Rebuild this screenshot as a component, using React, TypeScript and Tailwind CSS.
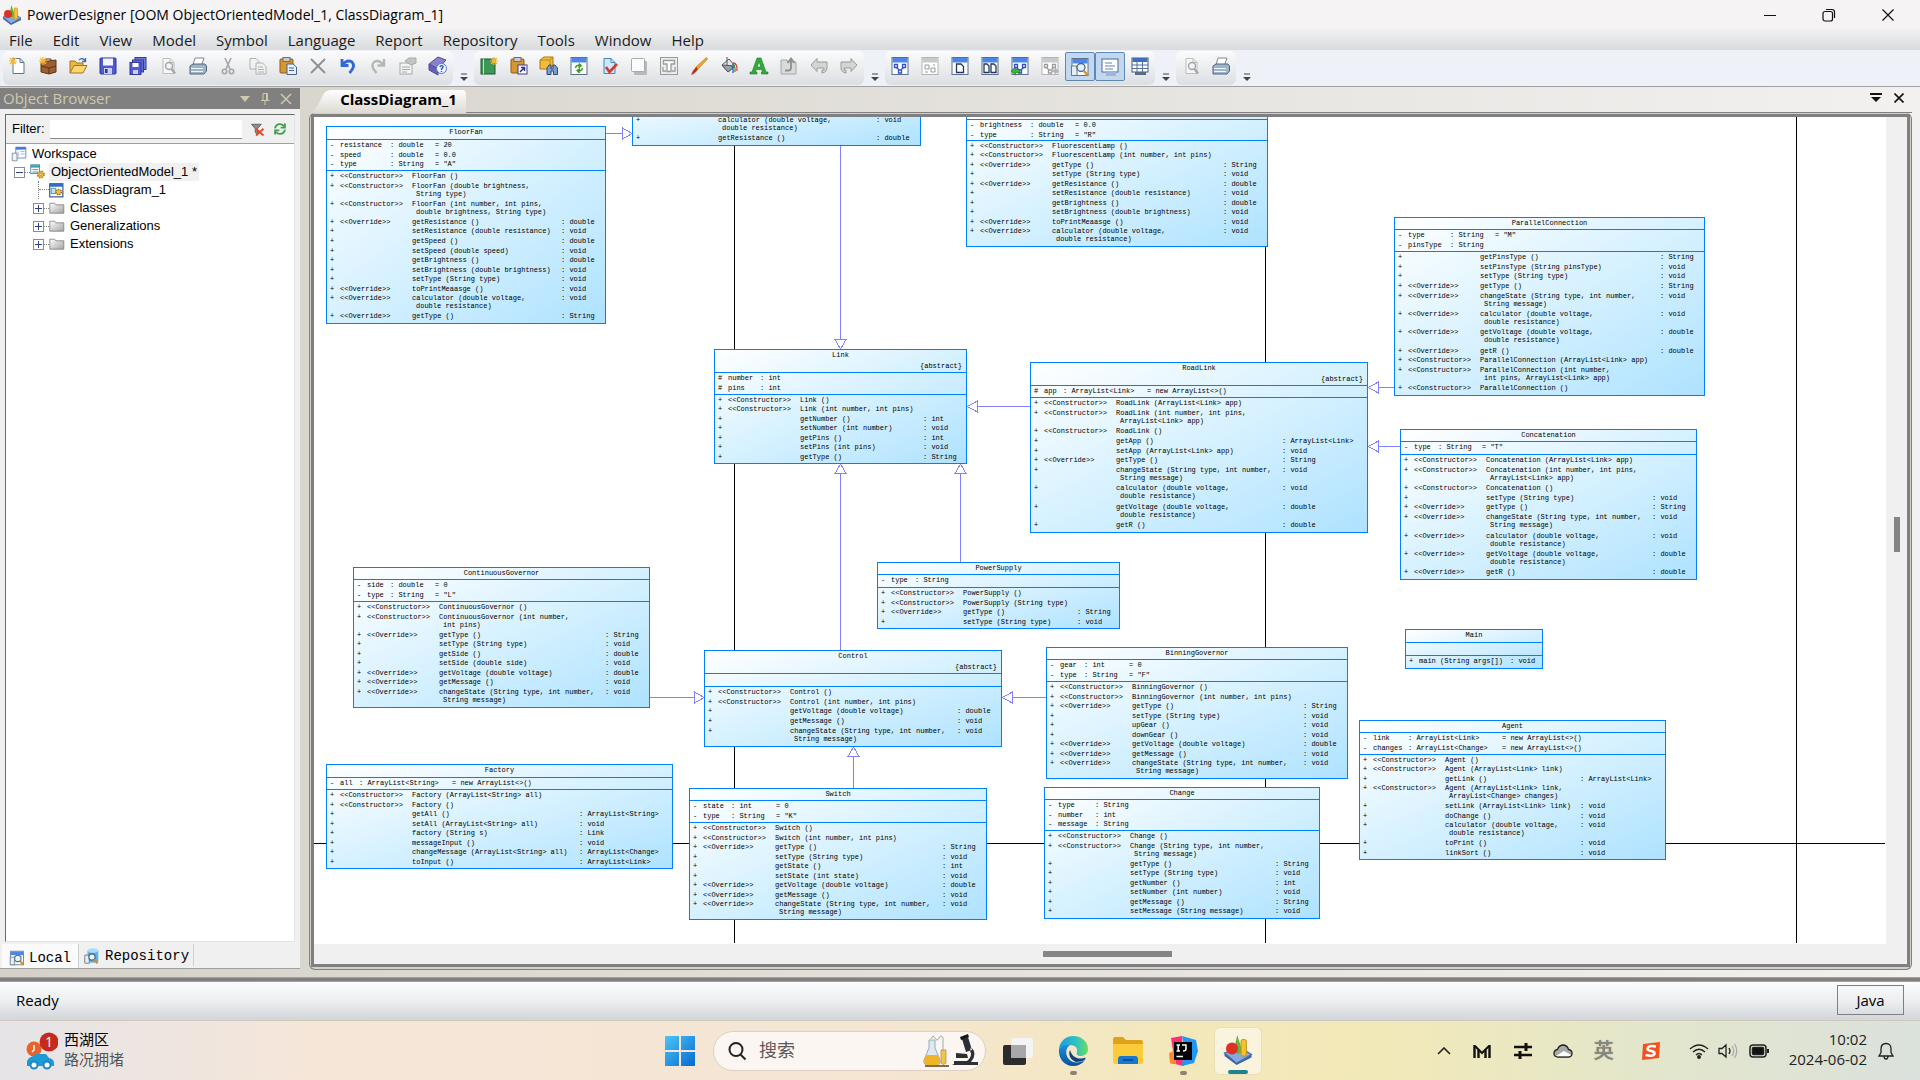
import React from "react";

type Attr = [sym: string, name: string, type: string, value?: string];
type Method = [stereo: "c" | "o" | "", text: string, type?: string, wrap?: string];

interface ClassBox {
  name: string;
  abstract?: boolean;
  x: number;
  y: number;
  w: number;
  /* heights of the title, attribute and operation compartments */
  parts: [number, number, number];
  /* offsets of the type, value and return columns */
  cols: [number, number, number];
  attrs: Attr[];
  methods: Method[];
  plain?: boolean;
  /* the title compartment is scrolled out of view */
  titleHidden?: boolean;
}

const CHANGE_STATE: [string, string, string] = ["changeState (String type, int number,", "void", "String message)"];
const CALC: [string, string, string] = ["calculator (double voltage,", "void", "double resistance)"];
const VOLT: [string, string, string] = ["getVoltage (double voltage,", "double", "double resistance)"];

const BOXES: ClassBox[] = [
  {
    name: "FloorFan", x: 12, y: 9, w: 280, parts: [13, 31, 153], cols: [64, 109, 235],
    attrs: [["-", "resistance", "double", "20"], ["-", "speed", "double", "0.0"], ["-", "type", "String", '"A"']],
    methods: [
      ["c", "FloorFan ()"],
      ["c", "FloorFan (double brightness,", "", "String type)"],
      ["c", "FloorFan (int number, int pins,", "", "double brightness, String type)"],
      ["o", "getResistance ()", "double"],
      ["", "setResistance (double resistance)", "void"],
      ["", "getSpeed ()", "double"],
      ["", "setSpeed (double speed)", "void"],
      ["", "getBrightness ()", "double"],
      ["", "setBrightness (double brightness)", "void"],
      ["", "setType (String type)", "void"],
      ["o", "toPrintMeaasge ()", "void"],
      ["o", ...CALC],
      ["o", "getType ()", "String"],
    ],
  },
  {
    name: "Lamp", x: 318, y: -30, w: 289, parts: [13, 14, 31], cols: [64, 109, 244], titleHidden: true,
    attrs: [],
    methods: [["", ...CALC], ["", "getResistance ()", "double"]],
  },
  {
    name: "FluorescentLamp", x: 652, y: -10, w: 302, parts: [12, 21, 106], cols: [64, 109, 257], titleHidden: true,
    attrs: [["-", "brightness", "double", "0.0"], ["-", "type", "String", '"R"']],
    methods: [
      ["c", "FluorescentLamp ()"],
      ["c", "FluorescentLamp (int number, int pins)"],
      ["o", "getType ()", "String"],
      ["", "setType (String type)", "void"],
      ["o", "getResistance ()", "double"],
      ["", "setResistance (double resistance)", "void"],
      ["", "getBrightness ()", "double"],
      ["", "setBrightness (double brightness)", "void"],
      ["o", "toPrintMeaasge ()", "void"],
      ["o", ...CALC],
    ],
  },
  {
    name: "ParallelConnection", x: 1080, y: 100, w: 311, parts: [12, 22, 144], cols: [56, 101, 266],
    attrs: [["-", "type", "String", '"M"'], ["-", "pinsType", "String"]],
    methods: [
      ["", "getPinsType ()", "String"],
      ["", "setPinsType (String pinsType)", "void"],
      ["", "setType (String type)", "void"],
      ["o", "getType ()", "String"],
      ["o", ...CHANGE_STATE],
      ["o", ...CALC],
      ["o", ...VOLT],
      ["o", "getR ()", "double"],
      ["c", "ParallelConnection (ArrayList<Link> app)"],
      ["c", "ParallelConnection (int number,", "", "int pins, ArrayList<Link> app)"],
      ["c", "ParallelConnection ()"],
    ],
  },
  {
    name: "Link", abstract: true, x: 400, y: 232, w: 253, parts: [23, 22, 69], cols: [46, 91, 209],
    attrs: [["#", "number", "int"], ["#", "pins", "int"]],
    methods: [
      ["c", "Link ()"],
      ["c", "Link (int number, int pins)"],
      ["", "getNumber ()", "int"],
      ["", "setNumber (int number)", "void"],
      ["", "getPins ()", "int"],
      ["", "setPins (int pins)", "void"],
      ["", "getType ()", "String"],
    ],
  },
  {
    name: "RoadLink", abstract: true, x: 716, y: 245, w: 338, parts: [23, 12, 135], cols: [33, 117, 252],
    attrs: [["#", "app", "ArrayList<Link>", "new ArrayList<>()"]],
    methods: [
      ["c", "RoadLink (ArrayList<Link> app)"],
      ["c", "RoadLink (int number, int pins,", "", "ArrayList<Link> app)"],
      ["c", "RoadLink ()"],
      ["", "getApp ()", "ArrayList<Link>"],
      ["", "setApp (ArrayList<Link> app)", "void"],
      ["o", "getType ()", "String"],
      ["", ...CHANGE_STATE],
      ["", ...CALC],
      ["", ...VOLT],
      ["", "getR ()", "double"],
    ],
  },
  {
    name: "Concatenation", x: 1086, y: 312, w: 297, parts: [12, 13, 125], cols: [38, 82, 252],
    attrs: [["-", "type", "String", '"T"']],
    methods: [
      ["c", "Concatenation (ArrayList<Link> app)"],
      ["c", "Concatenation (int number, int pins,", "", "ArrayList<Link> app)"],
      ["c", "Concatenation ()"],
      ["", "setType (String type)", "void"],
      ["o", "getType ()", "String"],
      ["o", ...CHANGE_STATE],
      ["o", ...CALC],
      ["o", ...VOLT],
      ["o", "getR ()", "double"],
    ],
  },
  {
    name: "PowerSupply", x: 563, y: 445, w: 243, parts: [12, 13, 41], cols: [38, 82, 200],
    attrs: [["-", "type", "String"]],
    methods: [
      ["c", "PowerSupply ()"],
      ["c", "PowerSupply (String type)"],
      ["o", "getType ()", "String"],
      ["", "setType (String type)", "void"],
    ],
  },
  {
    name: "ContinuousGovernor", x: 39, y: 450, w: 297, parts: [12, 22, 106], cols: [37, 82, 252],
    attrs: [["-", "side", "double", "0"], ["-", "type", "String", '"L"']],
    methods: [
      ["c", "ContinuousGovernor ()"],
      ["c", "ContinuousGovernor (int number,", "", "int pins)"],
      ["o", "getType ()", "String"],
      ["", "setType (String type)", "void"],
      ["", "getSide ()", "double"],
      ["", "setSide (double side)", "void"],
      ["o", "getVoltage (double voltage)", "double"],
      ["o", "getMessage ()", "void"],
      ["o", ...CHANGE_STATE],
    ],
  },
  {
    name: "Control", abstract: true, x: 390, y: 533, w: 298, parts: [23, 13, 60], cols: [38, 82, 253],
    attrs: [],
    methods: [
      ["c", "Control ()"],
      ["c", "Control (int number, int pins)"],
      ["", "getVoltage (double voltage)", "double"],
      ["", "getMessage ()", "void"],
      ["", ...CHANGE_STATE],
    ],
  },
  {
    name: "BinningGovernor", x: 732, y: 530, w: 302, parts: [12, 22, 97], cols: [38, 83, 257],
    attrs: [["-", "gear", "int", "0"], ["-", "type", "String", '"F"']],
    methods: [
      ["c", "BinningGovernor ()"],
      ["c", "BinningGovernor (int number, int pins)"],
      ["o", "getType ()", "String"],
      ["", "setType (String type)", "void"],
      ["", "upGear ()", "void"],
      ["", "downGear ()", "void"],
      ["o", "getVoltage (double voltage)", "double"],
      ["o", "getMessage ()", "void"],
      ["o", ...CHANGE_STATE],
    ],
  },
  {
    name: "Main", x: 1091, y: 512, w: 138, parts: [13, 13, 13], cols: [38, 82, 105], plain: true,
    attrs: [],
    methods: [["", "main (String args[])", "void"]],
  },
  {
    name: "Agent", x: 1045, y: 603, w: 307, parts: [12, 22, 105], cols: [49, 143, 221],
    attrs: [["-", "link", "ArrayList<Link>", "new ArrayList<>()"], ["-", "changes", "ArrayList<Change>", "new ArrayList<>()"]],
    methods: [
      ["c", "Agent ()"],
      ["c", "Agent (ArrayList<Link> link)"],
      ["", "getLink ()", "ArrayList<Link>"],
      ["c", "Agent (ArrayList<Link> link,", "", "ArrayList<Change> changes)"],
      ["", "setLink (ArrayList<Link> link)", "void"],
      ["", "doChange ()", "void"],
      ["", ...CALC],
      ["", "toPrint ()", "void"],
      ["", "linkSort ()", "void"],
    ],
  },
  {
    name: "Factory", x: 12, y: 647, w: 347, parts: [13, 12, 79], cols: [33, 126, 253],
    attrs: [["-", "all", "ArrayList<String>", "new ArrayList<>()"]],
    methods: [
      ["c", "Factory (ArrayList<String> all)"],
      ["c", "Factory ()"],
      ["", "getAll ()", "ArrayList<String>"],
      ["", "setAll (ArrayList<String> all)", "void"],
      ["", "factory (String s)", "Link"],
      ["", "messageInput ()", "void"],
      ["", "changeMessage (ArrayList<String> all)", "ArrayList<Change>"],
      ["", "toInput ()", "ArrayList<Link>"],
    ],
  },
  {
    name: "Switch", x: 375, y: 671, w: 298, parts: [12, 22, 97], cols: [42, 87, 253],
    attrs: [["-", "state", "int", "0"], ["-", "type", "String", '"K"']],
    methods: [
      ["c", "Switch ()"],
      ["c", "Switch (int number, int pins)"],
      ["o", "getType ()", "String"],
      ["", "setType (String type)", "void"],
      ["", "getState ()", "int"],
      ["", "setState (int state)", "void"],
      ["o", "getVoltage (double voltage)", "double"],
      ["o", "getMessage ()", "void"],
      ["o", ...CHANGE_STATE],
    ],
  },
  {
    name: "Change", x: 730, y: 670, w: 276, parts: [12, 31, 88], cols: [51, 96, 231],
    attrs: [["-", "type", "String"], ["-", "number", "int"], ["-", "message", "String"]],
    methods: [
      ["c", "Change ()"],
      ["c", "Change (String type, int number,", "", "String message)"],
      ["", "getType ()", "String"],
      ["", "setType (String type)", "void"],
      ["", "getNumber ()", "int"],
      ["", "setNumber (int number)", "void"],
      ["", "getMessage ()", "String"],
      ["", "setMessage (String message)", "void"],
    ],
  },
];

const STEREO = { c: "<<Constructor>>", o: "<<Override>>", "": "" };

function UmlClass({ box }: { box: ClassBox }) {
  const [typeCol, valueCol, returnCol] = box.cols;
  const [titleH, attrH, opH] = box.parts;
  const attrGrid = `10px ${typeCol - 14}px ${valueCol - typeCol}px 1fr`;
  const opGrid = box.plain ? `10px ${returnCol - 14}px 1fr` : `10px 72px ${returnCol - 86}px 1fr`;
  return (
    <article
      aria-label={box.name}
      className="absolute flex flex-col border border-[#0080ff] bg-linear-to-br from-white via-[#d6f1ff] to-[#aee2ff]"
      style={{ left: box.x, top: box.y, width: box.w }}
    >
      <header className="px-1 pt-px text-center" style={{ height: titleH - 1 }}>
        {!box.titleHidden && <h3>{box.name}</h3>}
        {box.abstract && <p className="pt-[3px] text-right">{"{abstract}"}</p>}
      </header>
      <div className="flex flex-col border-t border-[#0080ff] pb-px pl-[3px]" style={{ height: attrH }}>
        {box.attrs.map(([sym, name, type, value]) => (
          <div key={name} className="grid flex-1 pt-px" style={{ gridTemplateColumns: attrGrid }}>
            <span>{sym}</span>
            <span>{name}</span>
            <span>: {type}</span>
            <span>{value ? `= ${value}` : ""}</span>
          </div>
        ))}
      </div>
      <div className="flex flex-col border-t border-[#0080ff] pb-[2px] pl-[3px]" style={{ height: opH }}>
        {box.methods.map(([stereo, text, type, wrap], i) => (
          <div
            key={i}
            className={wrap ? "grid flex-2 pt-px" : "grid flex-1 pt-px"}
            style={{ gridTemplateColumns: opGrid }}
          >
            <span>+</span>
            {!box.plain && <span>{STEREO[stereo]}</span>}
            <span>
              {text}
              {wrap && <span className="block pl-1">{wrap}</span>}
            </span>
            <span>{type ? `: ${type}` : ""}</span>
          </div>
        ))}
      </div>
    </article>
  );
}

function Connectors() {
  return (
    <svg className="absolute inset-0 h-full w-full" fill="none" shapeRendering="crispEdges" aria-hidden="true">
      <g stroke="#000">
        <path d="M420.500 0V826M951.500 0V826M1482.500 0V826M0 726.500H1571" />
      </g>
      <g stroke="#8080ff" fill="#fff">
        <path d="M292 16.500H308M308.500 11V22L318 16.500Z" />
        <path d="M526.500 27V222M521 222.500H532L526.500 232Z" />
        <path d="M716 289.500H663M663.500 284V295L653 289.500Z" />
        <path d="M526.500 533V356M521 356.500H532L526.500 347Z" />
        <path d="M646.500 445V356M641 356.500H652L646.500 347Z" />
        <path d="M1080 270.500H1064M1064.500 265V276L1054 270.500Z" />
        <path d="M1086 329.500H1064M1064.500 324V335L1054 329.500Z" />
        <path d="M336 580.500H380M380.500 575V586L390 580.500Z" />
        <path d="M732 580.500H698M698.500 575V586L688 580.500Z" />
        <path d="M539.500 671V639M534 639.500H545L539.500 630Z" />
      </g>
    </svg>
  );
}

/* ---------- icons, all on a 20 x 20 grid ---------- */

const page = (fill = "#fff", stroke = "#5b7690") => (
  <path d="M5 2.500H12L16 6.500V17.500H5Z M12 2.500V6.500H16" fill={fill} stroke={stroke} />
);
const spark = (x: number, y: number) => (
  <path
    d={`M${x} ${y - 4}V${y + 4}M${x - 4} ${y}H${x + 4}M${x - 3} ${y - 3}L${x + 3} ${y + 3}M${x + 3} ${y - 3}L${x - 3} ${y + 3}`}
    stroke="#f5b72b"
    strokeWidth="1.200"
  />
);
const lens = (c: string) => (
  <g>
    <circle cx="11" cy="10" r="3.500" fill="#eef6fb" stroke={c} strokeWidth="1.400" />
    <path d="M13.500 13L17 17.500" stroke={c} strokeWidth="2.200" />
  </g>
);
const windowFrame = (gray = false) => (
  <g>
    <rect x="2" y="1.500" width="16" height="17" fill="#fff" stroke={gray ? "#b4b4b4" : "#5a6f8c"} />
    <rect x="2.500" y="2" width="15" height="4.500" fill={gray ? "#c9c9c9" : "#4d86e6"} />
  </g>
);
const printer = (
  <g>
    <path d="M7 2H16L13.500 9H5Z" fill="#fff" stroke="#7b8894" />
    <path d="M2 10L5 8H17L18.500 10V15L16 18H2Z" fill="#9fb4c8" stroke="#4c6680" />
    <path d="M3 12.500H15M3 15.500H15" stroke="#eef4fa" />
  </g>
);
const clipboard = (
  <g>
    <rect x="2" y="3" width="13" height="14" rx="1" fill="#d9962f" stroke="#8d5a14" />
    <rect x="5" y="1.500" width="7" height="4" fill="#c8ccd2" stroke="#6b6f75" />
  </g>
);
const nodes = (c: string) => (
  <path d="M4.500 8.500h3v3h-3zM12.500 8.500h3v3h-3zM8.500 14h3v3h-3zM6 11.500L9.500 14M14 11.500L10.500 14" fill="#fff" stroke={c} strokeWidth="1.300" />
);
const logo = (
  <g>
    <path d="M1 12L9 19L19 13L11 8Z" fill="#86a9dc" stroke="#4c70a8" strokeWidth=".8" />
    <path d="M1 12V14L9 20L19 15V13L9 18.500Z" fill="#3f66a6" />
    <path d="M9.500 0L13 11Q10 13.500 7 11Z" fill="#66b535" />
    <rect x="12" y="3" width="3.600" height="11" rx="1.200" fill="#f1c232" stroke="#bd8d10" strokeWidth=".6" />
    <circle cx="6" cy="9" r="4" fill="#dc2f26" />
  </g>
);
const modelGlyph = (
  <g>
    <rect x="1" y="1" width="11" height="11" fill="#fff" stroke="#35769c" />
    <path d="M1 3H12" stroke="#35a1a1" strokeWidth="3" />
    <path d="M3 7H10M3 10H10" stroke="#35769c" />
    <circle cx="13.500" cy="13" r="4" fill="#f0bf43" stroke="#b67b12" strokeWidth="2" strokeDasharray="2 1.200" />
    <circle cx="13.500" cy="13" r="1.400" fill="#fff" stroke="#b67b12" />
  </g>
);

const ICONS: Record<string, React.ReactNode> = {
  logo,
  model: modelGlyph,
  "New Model": <g>{page()}{spark(5, 5)}</g>,
  "New Project": (
    <g>
      <path d="M3 6L18 4V16L11 18L3 16Z" fill="#9b5f32" stroke="#5f3515" />
      <path d="M3 10L11 12L18 10M11 12V18" stroke="#5f3515" />
      <path d="M8 5V3H13V4.500" stroke="#5f3515" />
      {spark(5, 5)}
    </g>
  ),
  Open: (
    <g>
      <path d="M2 17V5H7L9 7H15V10" fill="#e9b64a" stroke="#a4761c" />
      <path d="M2 17L6 9.500H19L15 17Z" fill="#fcd673" stroke="#a4761c" />
      <path d="M11 4Q15 1 17 5M17.500 2V5.500H14" stroke="#3b6fae" strokeWidth="1.300" />
    </g>
  ),
  Save: (
    <g>
      <rect x="2" y="2" width="16" height="16" rx="1" fill="#4f5cd0" stroke="#2d3694" />
      <rect x="5" y="2.500" width="10" height="7" fill="#f4f6ff" />
      <rect x="6" y="12" width="8" height="6" fill="#c9cdf0" />
      <rect x="7" y="13" width="2.500" height="4" fill="#2d3694" />
    </g>
  ),
  "Save All": (
    <g stroke="#33389a">
      <rect x="7" y="1.500" width="11" height="12" fill="#7078d8" />
      <rect x="4.500" y="4" width="11" height="12" fill="#6068d2" />
      <rect x="2" y="6.500" width="11" height="12" fill="#525bcc" />
      <path d="M4.500 7H10.500V11H4.500Z" fill="#fff" stroke="none" />
      <path d="M5 14H10V18H5Z" fill="#c9cdf0" stroke="none" />
    </g>
  ),
  "Print Preview": <g>{page("#f7f7f7", "#bdbdbd")}{lens("#a5a5a5")}</g>,
  Print: printer,
  Cut: (
    <g stroke="#a6a6a6" strokeWidth="1.600">
      <path d="M7 2L12 13M13 2L8 13" />
      <circle cx="6.500" cy="15.500" r="2.200" />
      <circle cx="13.500" cy="15.500" r="2.200" />
    </g>
  ),
  Copy: (
    <g fill="#f1f1f1" stroke="#b0b0b0">
      <path d="M2 2.500H8L11 5.500V13H2Z" />
      <path d="M8 7H14.500L18 10.500V18H8Z" />
      <path d="M10 11H15M10 13.500H16M10 16H16" />
    </g>
  ),
  Paste: <g>{clipboard}<path d="M9 8H15L18.500 11V18.500H9Z" fill="#e8f1fb" stroke="#43648c" /><path d="M11 12H16M11 14.500H16" stroke="#43648c" /></g>,
  Delete: <path d="M3 3L17 17M17 3L3 17" stroke="#8f8f8f" strokeWidth="1.800" />,
  Undo: <path d="M4 3V9.500H10.500M4.500 9Q9 3 14 6Q18 10 11.500 17" stroke="#3468d6" strokeWidth="2.800" />,
  Redo: <path d="M16 3V9.500H9.500M15.500 9Q11 3 6 6Q2 10 8.500 17" stroke="#b6b6b6" strokeWidth="2.400" />,
  Properties: (
    <g stroke="#a8a8a8" fill="#f3f3f3">
      <rect x="2" y="7" width="12" height="11" />
      <path d="M4 11H12M4 13.500H12M4 16H9" />
      <path d="M7 5L11 2H18V7L13 9L10 7Z" fill="#c4c4c4" />
    </g>
  ),
  Help: (
    <g>
      <path d="M1 8L10 1L18 4L10 13Z" fill="#8a80cc" stroke="#544a9c" />
      <path d="M1 8V14L10 19V13Z" fill="#6a5fb6" stroke="#544a9c" />
      <circle cx="13.500" cy="12.500" r="5" fill="#f0f4ff" stroke="#5a78c0" />
      <path d="M11.800 11Q13.500 8.500 15 10.500Q15 12 13.500 13V14M13.500 15V16" stroke="#2c55b0" strokeWidth="1.400" />
    </g>
  ),
  "New Diagram": <g><rect x="2" y="3" width="14" height="15" fill="#3c9656" stroke="#1c5a30" /><path d="M4.500 3V18" stroke="#bfe6c8" />{spark(15, 5)}</g>,
  "Paste as Shortcut": <g>{clipboard}<rect x="9" y="9" width="9" height="9" fill="#fff" stroke="#3a3f78" /><path d="M11 16L15 12M12 11.500H15.500V15" stroke="#2a2f9a" strokeWidth="1.500" /></g>,
  "Find Objects": (
    <g>
      <path d="M1 4L5 1H14V10L11 13H1Z" fill="#f3bb3c" stroke="#a77813" />
      <path d="M1 4H11L14 1M11 4V12" stroke="#a77813" strokeWidth=".7" />
      <path d="M8 18.500V12L10 9H12V13H14V9H16L18.500 12V18.500H14.500V15H12V18.500Z" fill="#7d9dcc" stroke="#2e4b80" />
    </g>
  ),
  Refresh: <g>{windowFrame()}<path d="M6.500 12Q7 8.500 11 9.500M10 7.500L12 9.700L9.500 11.500M13.500 12Q13 15.500 9 14.700M10.500 17L8.300 14.500L11 12.800" stroke="#3c9a1f" strokeWidth="1.600" /></g>,
  "Check Model": <g>{page("#cfe8fb", "#3f86c4")}<path d="M7 11L10.500 16L18 8" stroke="#d8362a" strokeWidth="2.600" /></g>,
  Shadow: <g><rect x="5" y="5" width="13" height="14" rx="1" fill="#b9b9b9" /><rect x="2.500" y="2.500" width="13" height="13" rx="1" fill="#fbfbfb" stroke="#a8a8a8" /></g>,
  "Text Frame": <g stroke="#9a9a9a"><rect x="1.500" y="1.500" width="17" height="17" fill="#ececec" /><path d="M4.500 4.500H15.500V8H12V15.500H8V8H4.500ZM4 11V15H7M16 11V15H13" strokeWidth="1.300" fill="#fff" /></g>,
  "Line Style": <g><path d="M17.500 1.500L18.500 3L9 13L7 11Z" fill="#f0a92a" stroke="#b77512" strokeWidth=".7" /><path d="M7 11L9 13Q7 17 2 19Q4 14 7 11Z" fill="#b5321d" /></g>,
  "Fill Style": <g><path d="M3 9L10 3L16 10L9 16Z" fill="#e3e7eb" stroke="#555" /><path d="M8 1V9M3 9L16 10L9 16Z" fill="#9ca3aa" stroke="#555" /><path d="M14 7Q18.500 7 18 15" stroke="#d13a3a" strokeWidth="1.300" /><path d="M13 8Q16.500 9 16 16" stroke="#36a13a" strokeWidth="1.300" /><path d="M12.500 9.500Q14.500 11 14 17" stroke="#3a52d1" strokeWidth="1.300" /></g>,
  Font: <path d="M1 18V16H3L8 2H12L17 16H19V18H12.500V16H13.500L12.700 13.500H7.300L6.500 16H8V18ZM8.200 11H11.800L10 5.500Z" fill="#33ab3b" stroke="#1b7a25" strokeWidth=".6" />,
  "Send Back": <g stroke="#a8a8a8"><path d="M2 4H8L9 6H17V18H2Z" fill="#dadada" /><path d="M6 14.500H10Q12 14.500 12 11V4M8.500 7L12 2.500L15.500 7" stroke="#8f8f8f" strokeWidth="1.800" /></g>,
  Previous: <path d="M8 2.500V6H18V12Q18 16 13 17V14H15V12H8V15.500L2 9Z" fill="#d4d4d4" stroke="#9b9b9b" />,
  Next: <path d="M12 2.500V6H2V12Q2 16 7 17V14H5V12H12V15.500L18 9Z" fill="#d4d4d4" stroke="#9b9b9b" />,
  "Diagram View": <g>{windowFrame()}{nodes("#2f50c8")}</g>,
  "Group View": <g>{windowFrame(true)}<path d="M5 9h4v4H5zM11 12h4v4h-4zM5 16h3M13 9h2" stroke="#999" /></g>,
  "One Page": <g>{windowFrame()}<path d="M6.500 8H11L13.500 10.500V16.500H6.500Z" fill="#fff" stroke="#23365c" strokeWidth="1.300" /></g>,
  "Two Pages": <g>{windowFrame()}<path d="M4 8H7L9 10V16.500H4ZM11 8H14L16 10V16.500H11Z" fill="#fff" stroke="#23365c" strokeWidth="1.300" /></g>,
  "Impact View": <g>{windowFrame()}{nodes("#2f50c8")}<path d="M1 15L5.500 11V13.500H10V16.500H5.500V19Z" fill="#3db53a" stroke="#1f7a1e" strokeWidth=".7" /></g>,
  "Lineage View": <g>{windowFrame(true)}{nodes("#9c9c9c")}<path d="M19 15L14.500 11V13.500H11V16.500H14.500V19Z" fill="#b4b4b4" /></g>,
  "Object Browser": (
    <g>
      {windowFrame()}
      <path d="M1.500 9H7V18.500H1.500Z" fill="#e9eef4" stroke="#66788c" />
      <circle cx="11" cy="10.500" r="4" fill="#e5f3fb" stroke="#4d6a86" strokeWidth="1.400" />
      <path d="M14 14L18 18.500" stroke="#d18f2c" strokeWidth="2.600" />
    </g>
  ),
  Output: <g><rect x="2" y="2" width="16" height="13" fill="#fff" stroke="#45689c" /><path d="M5 6H12M5 9H15M5 12H13" stroke="#5f82b8" /><path d="M6 15H16V19H6Z" fill="#9cb6da" /></g>,
  "Result List": <g><rect x="2" y="2" width="16" height="14" fill="#fdfdff" stroke="#45618c" /><path d="M2.500 4H17.500" stroke="#3f6fc0" strokeWidth="4" /><path d="M2 9H18M2 12.500H18M7 6V16M12.500 6V16" stroke="#58749f" /><path d="M5 16H16V19H5Z" fill="#5b6b84" /></g>,
  "Preview Page": <g>{page("#f7f7f7", "#bdbdbd")}{lens("#a5a5a5")}</g>,
  "Print Page": printer,
  workspace: <g><path d="M6 1.500H18.500V15H6Z" fill="#fff" stroke="#4b76c8" /><path d="M6 3H18.500" stroke="#3f74d8" strokeWidth="3" /><path d="M9 7V13M12 7H17M12 10H17" stroke="#8aa3cc" /><path d="M1.500 9H7.500V18.500H1.500Z" fill="#eef3fa" stroke="#6d7f9c" /></g>,
  folder: <g><path d="M1 16.500V4H7L8.500 6H18.500V16.500Z" fill="url(#fold)" stroke="#7c7c7c" /><defs><linearGradient id="fold" x1="0" y1="0" x2="1" y2="1"><stop offset="0" stopColor="#fff" /><stop offset="1" stopColor="#a3a3a3" /></linearGradient></defs></g>,
  diagram: <g><rect x="1" y="1" width="17.500" height="17.500" fill="#fff" stroke="#2b4f7e" strokeWidth="1.500" /><path d="M1 3H18.500" stroke="#336ec2" strokeWidth="4" /><path d="M3 7H9V14H3Z" fill="#bfe6ee" stroke="#2b7e90" /><circle cx="13" cy="12" r="3.500" fill="#f2c14a" stroke="#ad7410" strokeWidth="2" strokeDasharray="2 1" /></g>,
  clear: <g><path d="M2 3H15L10 9V16L7 14V9Z" fill="#8b8f94" stroke="#4c4f53" /><path d="M8 9L18 18M18 9L8 18" stroke="#e34a2c" strokeWidth="2.600" /></g>,
  reload: <path d="M3 9Q4 3 10 3Q14 3 15.500 6M17 2V8H11M17 11Q16 17 10 17Q6 17 4.500 14M3 18V12H9" stroke="#3b9f4b" strokeWidth="2.600" />,
  repository: <g><path d="M5 4V16Q11 19 17 16V4Z" fill="#59b4ec" /><ellipse cx="11" cy="4" rx="6" ry="2.500" fill="#a8dcfa" /><path d="M2 9H7V18H2Z" fill="#e9eef4" stroke="#66788c" /><circle cx="10" cy="11" r="3.500" fill="#e5f3fb" stroke="#4d6a86" strokeWidth="1.400" /><path d="M12.500 14L16 18" stroke="#d18f2c" strokeWidth="2.600" /></g>,
};

function Icon({ name, className = "size-5" }: { name: string; className?: string }) {
  return (
    <svg viewBox="0 0 20 20" fill="none" className={className} aria-hidden="true">
      {ICONS[name]}
    </svg>
  );
}

const TOOL_GROUPS: string[][] = [
  ["New Model", "New Project", "Open", "Save", "Save All", "Print Preview", "Print", "Cut", "Copy", "Paste", "Delete", "Undo", "Redo", "Properties", "Help"],
  ["New Diagram", "Paste as Shortcut", "Find Objects", "Refresh", "Check Model", "Shadow", "Text Frame", "Line Style", "Fill Style", "Font", "Send Back", "Previous", "Next"],
  ["Diagram View", "Group View", "One Page", "Two Pages", "Impact View", "Lineage View", "Object Browser", "Output", "Result List"],
  ["Preview Page", "Print Page"],
];
const PRESSED = ["Object Browser", "Output"];
const MENUS = ["File", "Edit", "View", "Model", "Symbol", "Language", "Report", "Repository", "Tools", "Window", "Help"];

function TitleBar() {
  return (
    <header className="flex h-[29px] shrink-0 items-center bg-[#f5f3f4] pl-[2px] text-[14px] text-black">
      <Icon name="logo" />
      <h1 className="flex-1 pl-[5px]">PowerDesigner [OOM ObjectOrientedModel_1, ClassDiagram_1]</h1>
      <button aria-label="Minimize" className="flex h-full w-[59px] items-center justify-center">
        <svg viewBox="0 0 12 12" className="size-3" stroke="#111" fill="none"><path d="M0 6.500H12" /></svg>
      </button>
      <button aria-label="Restore" className="flex h-full w-[59px] items-center justify-center">
        <svg viewBox="0 0 14 14" className="size-[14px]" stroke="#111" strokeWidth="1.200" fill="none"><rect x="1" y="3.500" width="9.500" height="9.500" rx="2" /><path d="M4 1.500H10Q12.500 1.500 12.500 4V10" /></svg>
      </button>
      <button aria-label="Close" className="mr-[3px] flex h-full w-[59px] items-center justify-center">
        <svg viewBox="0 0 12 12" className="size-3" stroke="#111" strokeWidth="1.200" fill="none"><path d="M.5.500L11.500 11.500M11.500.500L.5 11.500" /></svg>
      </button>
    </header>
  );
}

function Toolbar() {
  return (
    <div className="flex h-[37px] shrink-0 border-b border-[#a0a0a0] bg-[#eef2f8] pl-[3px]">
      {TOOL_GROUPS.map((group, g) => (
        <div key={g} className="flex">
          <div className="mt-px flex h-[34px] rounded-md bg-linear-to-b from-[#fbfbfc] to-[#dcdfe2]">
            {group.map((name) => (
              <button
                key={name}
                aria-label={name}
                aria-pressed={PRESSED.includes(name)}
                className={
                  PRESSED.includes(name)
                    ? "mt-px flex h-[29px] w-[30px] items-center justify-center rounded-xs border border-[#5f87b5] bg-[#c3d8ef]"
                    : "flex h-[30px] w-[30px] items-center justify-center"
                }
              >
                <Icon name={name} />
              </button>
            ))}
          </div>
          <button aria-label="Toolbar options" className="flex w-[21px] items-end justify-center pb-[5px]">
            <svg viewBox="0 0 8 8" className="size-2"><path d="M1 1H7" stroke="#444" /><path d="M0 4H8L4 8Z" fill="#444" /></svg>
          </button>
        </div>
      ))}
    </div>
  );
}

const TREE = [
  { label: "Classes", expandable: true, icon: "folder" },
  { label: "Generalizations", expandable: true, icon: "folder" },
  { label: "Extensions", expandable: true, icon: "folder" },
];

function Expander({ open = false }: { open?: boolean }) {
  return (
    <button aria-label={open ? "Collapse" : "Expand"} className="flex size-[11px] items-center justify-center border border-[#8c8c8c] bg-white">
      <svg viewBox="0 0 7 7" className="size-[7px]" stroke="#26408c" fill="none"><path d={open ? "M0 3.500H7" : "M0 3.500H7M3.500 0V7"} /></svg>
    </button>
  );
}

function ObjectBrowser() {
  return (
    <aside className="mb-[8px] mt-px flex w-[300px] shrink-0 flex-col border-b border-[#a0a0a0] bg-[#f0f0f0]">
      <div className="flex h-[21px] items-center gap-[7px] bg-[#808080] pl-[3px] pr-[8px] text-[#cfcaab]">
        <h2 className="flex-1 text-[15px]">Object Browser</h2>
        <svg viewBox="0 0 10 6" className="mr-[2px] w-[10px]"><path d="M0 0H10L5 6Z" fill="#cfcaab" /></svg>
        <svg viewBox="0 0 12 14" className="mr-[2px] w-3" fill="none" stroke="#cfcaab"><path d="M4 1.500H8.500V8.500H4ZM7.500 1.500V8M2 8.500H10.500M6 8.500V13" /></svg>
        <svg viewBox="0 0 12 12" className="w-3" stroke="#cfcaab" strokeWidth="1.500"><path d="M1 1L11 11M11 1L1 11" /></svg>
      </div>
      <div className="mx-[5px] mt-[5px] flex flex-1 flex-col border border-b-[#e3e3e3] border-l-[#696969] border-r-[#e3e3e3] border-t-[#696969] bg-white font-['Liberation_Sans',sans-serif] text-[13px] text-black">
        <div className="flex h-[29px] items-center border-b border-[#a0a0a0] bg-[#f0f0f0] pl-[6px] pr-[7px]">
          <label htmlFor="filter" className="w-[38px]">Filter:</label>
          <input id="filter" className="h-[19px] min-w-0 flex-1 border-b border-[#8a8a8a] bg-white px-1" />
          <button aria-label="Clear filter" className="ml-2"><Icon name="clear" className="size-[15px]" /></button>
          <button aria-label="Refresh filter" className="ml-[8px]"><Icon name="reload" className="size-[14px]" /></button>
        </div>
        <ul className="pt-px leading-[18px]">
          <li className="flex items-center gap-[5px] pl-[5px]"><Icon name="workspace" className="size-4" />Workspace</li>
          <li className="flex items-center pl-[8px]">
            <Expander open />
            <span className="w-[5px] border-t border-dotted border-[#808080]" />
            <Icon name="model" className="size-4" />
            <span className="ml-[3px] bg-[#f0f0f0] pl-[2px] pr-[2px]">ObjectOrientedModel_1 *</span>
          </li>
          <li>
            <ul>
              <li className="flex items-center pl-[32px]">
                <span className="h-[18px] w-[11px] border-l border-dotted border-[#808080]"><span className="block h-[9px] border-b border-dotted border-[#808080]" /></span>
                <Icon name="diagram" className="size-[15px]" />
                <span className="pl-[6px]">ClassDiagram_1</span>
              </li>
              {TREE.map((item) => (
                <li key={item.label} className="flex items-center pl-[27px]">
                  <Expander />
                  <span className="w-[5px] border-t border-dotted border-[#808080]" />
                  <Icon name={item.icon} className="size-4" />
                  <span className="pl-[5px]">{item.label}</span>
                </li>
              ))}
            </ul>
          </li>
        </ul>
      </div>
      <div role="tablist" className="mt-[2px] flex h-[24px] items-start pl-[2px] font-['Liberation_Mono',monospace] text-[14px] text-black">
        <button role="tab" aria-selected="true" className="flex h-[24px] items-center gap-1 border-r border-[#d0d0d0] bg-[#fafafa] px-[7px] pt-[4px]">
          <Icon name="Object Browser" className="size-4" />Local
        </button>
        <button role="tab" aria-selected="false" className="flex h-[22px] items-center gap-1 border-r border-[#d0d0d0] px-1 pt-[2px]">
          <Icon name="repository" className="size-[18px]" />Repository
        </button>
      </div>
    </aside>
  );
}

function DiagramArea() {
  return (
    <main className="flex min-w-0 flex-1 flex-col pl-[9px] pr-2">
      <div className="flex h-[26px] shrink-0 items-end">
        <button role="tab" aria-selected="true" className="relative h-[24px] w-[157px] pb-[4px] text-[15px] font-bold leading-[20px] text-black">
          <svg viewBox="0 0 157 24" preserveAspectRatio="none" className="absolute inset-0 h-full w-full" aria-hidden="true">
            <defs><linearGradient id="tab" x2="0" y2="1"><stop stopColor="#fefefe" /><stop offset="1" stopColor="#dedad3" /></linearGradient></defs>
            <path d="M2 24Q8 19 13 8Q16 1 22 1H153Q157 1 157 5V24Z" fill="url(#tab)" />
          </svg>
          <span className="relative pl-[22px]">ClassDiagram_1</span>
        </button>
        <div className="flex h-full flex-1 items-center justify-end gap-3 border-b border-[#808080] pb-1 pr-[8px]">
          <button aria-label="Window list"><svg viewBox="0 0 12 9" className="w-3"><path d="M0 1H12" stroke="#111" strokeWidth="2" /><path d="M1 4H11L6 9Z" fill="#111" /></svg></button>
          <button aria-label="Close diagram"><svg viewBox="0 0 10 10" className="w-[10px]" stroke="#111" strokeWidth="1.600"><path d="M.5.500L9.500 9.500M9.500.500L.5 9.500" /></svg></button>
        </div>
      </div>
      <div className="mb-[7px] flex flex-1 rounded-md border border-t-0 border-[#808080] bg-[#d4d0c8] px-px pb-[2px] pt-px">
        <div className="flex min-w-0 flex-1 border-[3px] border-[#808080] bg-[#f0f0f0]">
          <div className="flex min-w-0 flex-1 flex-col">
            <div className="relative flex-1 overflow-hidden bg-white font-['Liberation_Mono',monospace] text-[7px] leading-[8px] whitespace-pre text-black">
              <Connectors />
              {BOXES.map((box) => (
                <UmlClass key={box.name} box={box} />
              ))}
            </div>
            <div className="flex h-[20px] items-center">
              <div className="ml-[46.4%] h-[6px] w-[8.2%] bg-[#858585]" />
            </div>
          </div>
          <div className="flex w-[21px] flex-col items-center">
            <div className="basis-[47.2%]" />
            <div className="h-[35px] w-[6px] bg-[#858585]" />
          </div>
        </div>
      </div>
    </main>
  );
}

function Taskbar() {
  return (
    <footer className="grid h-[60px] shrink-0 grid-cols-[1fr_auto_1fr] items-center border-t border-[#cfc9bd] text-[15px] text-[#222] [background-image:linear-gradient(90deg,#e6e4e8_0%,#f5e6d8_16%,#f5e5d3_45%,#f3e8bb_62%,#f2e9b8_72%,#e2e6cd_87%,#dbe1dc_100%)]">
      <button className="flex items-center gap-[6px] justify-self-start pl-[26px] text-left leading-[20px]">
        <svg viewBox="0 0 32 38" className="h-[38px] w-8" aria-hidden="true">
          <circle cx="8" cy="17" r="7.500" fill="#e8622c" />
          <path d="M8 13V18L6 20" stroke="#fff" strokeWidth="1.500" fill="none" />
          <path d="M3 26L7 24L10 22H20L23 26Q28 27 28 31V34H1V29Z" fill="#1e9bd7" />
          <circle cx="8" cy="33" r="3.500" fill="#fff" stroke="#1e86c7" strokeWidth="2" />
          <circle cx="21" cy="33" r="3.500" fill="#fff" stroke="#1e86c7" strokeWidth="2" />
          <circle cx="23" cy="10" r="9.500" fill="#c42b1c" />
          <text x="23" y="15" textAnchor="middle" fontSize="14" fill="#fff">1</text>
        </svg>
        <span className="pb-1">
          <span className="block text-black">西湖区</span>
          <span className="block text-[#555]">路况拥堵</span>
        </span>
      </button>
      <div className="flex items-center pl-[7px]">
        <button aria-label="Start" className="mr-[18px]">
          <svg viewBox="0 0 30 30" className="size-[30px]">
            <defs><linearGradient id="win" x2="1" y2="1"><stop stopColor="#4cc6f8" /><stop offset="1" stopColor="#0669cf" /></linearGradient></defs>
            <path d="M0 0H14V14H0ZM16 0H30V14H16ZM0 16H14V30H0ZM16 16H30V30H16Z" fill="url(#win)" />
          </svg>
        </button>
        <label className="flex h-10 w-[273px] items-center rounded-full border border-[#ddd0c2] bg-[#fbf6f1] pl-[13px] pr-1">
          <svg viewBox="0 0 20 20" className="size-5" fill="none" stroke="#222" strokeWidth="2"><circle cx="9" cy="8.500" r="6.500" /><path d="M13.500 13.500L18.500 18.500" /></svg>
          <input aria-label="搜索" placeholder="搜索" className="ml-3 min-w-0 flex-1 bg-transparent text-[18px] placeholder:text-[#5a5a5a]" />
          <svg viewBox="0 0 60 34" className="h-[34px] w-[60px]" aria-hidden="true">
            <path d="M8 6H14V14L19 26Q20 31 15 31H7Q2 31 3 26L8 14Z" fill="#dfeaf0" stroke="#97abb8" />
            <path d="M5 21H17L19 27Q19 31 15 31H7Q3 31 3 27Z" fill="#f0b428" />
            <path d="M10 5Q12 0 14 4T18 4T22 4V16" fill="none" stroke="#9aa" />
            <path d="M20 16H25V29Q22.500 32 20 29Z" fill="#f3c64a" stroke="#a9894a" strokeWidth=".7" />
            <path d="M4 32H28" stroke="#8a6c43" strokeWidth="2" />
            <path d="M41 5L47 3L51 16L45 18ZM31 31H57V28H50Q57 20 50 13L49 17Q52 22 46 27H33V30ZM35 19L46 20L47 24H35Z" fill="#2c2f33" />
            <path d="M39 3L47 0L48 3L40 6Z" fill="#14171a" />
          </svg>
        </label>
        <div className="ml-[8px] flex items-center gap-[7px]">
          <button aria-label="Task view" className="flex size-12 items-center justify-center">
            <svg viewBox="0 0 30 30" className="size-[30px]"><rect x="8" y="2" width="22" height="20" rx="2" fill="#f4f4f4" /><rect x="0" y="9" width="23" height="20" rx="2" fill="#2b2b2b" /><rect x="8" y="9" width="15" height="13" fill="#a8a8a8" /></svg>
          </button>
          <button aria-label="Edge" className="flex h-12 w-12 flex-col items-center justify-end gap-[5px]">
            <svg viewBox="0 0 30 30" className="size-[30px]">
              <defs>
                <linearGradient id="edgeA" x2="1" y2="0"><stop stopColor="#1e9ae0" /><stop offset=".6" stopColor="#2fc4c0" /><stop offset="1" stopColor="#6ddc5c" /></linearGradient>
                <linearGradient id="edgeB" x2="0" y2="1"><stop stopColor="#1795dc" /><stop offset="1" stopColor="#0c4f9c" /></linearGradient>
              </defs>
              <path d="M1 13C2 4 9 0 15 0C24 0 30 6 30 13C30 18 26 20 23 20C19 20 18 18 19 16C20 12 17 9 12 9C7 9 3 11 1 13Z" fill="url(#edgeA)" />
              <path d="M1 13C4 9 8 8 12 9C8 12 7 17 10 22C14 28 22 27 27 24C24 28 20 30 15 30C6 30 0 22 1 13Z" fill="url(#edgeB)" />
              <path d="M12 14C10 18 12 24 18 26C22 26 25 25 27 23.500C28 22 27 21.500 26 22C20 24 14 21 12 14Z" fill="#0d417f" />
            </svg>
            <span className="h-1 w-[7px] rounded-full bg-[#8a8572]" />
          </button>
          <button aria-label="Files" className="flex size-12 items-center justify-center">
            <svg viewBox="0 0 30 28" className="w-[30px]"><path d="M0 2Q0 0 2 0H10L13 3H28Q30 3 30 5V10H0Z" fill="#e0a21b" /><path d="M0 7H30V26Q30 27 28 27H2Q0 27 0 25Z" fill="#fccb3a" /><path d="M5 27V22Q5 19 8 19H22Q25 19 25 22V27Z" fill="#1878d0" /><path d="M10 23H20" stroke="#0b4f95" strokeWidth="2" /></svg>
          </button>
          <button aria-label="IntelliJ IDEA" className="flex h-12 w-12 flex-col items-center justify-end gap-[5px]">
            <svg viewBox="0 0 30 30" className="size-[30px]"><path d="M3 2L14 0L16 30L2 27L5 15Z" fill="#fc2f78" /><path d="M14 0L28 4L30 15L26 27L14 30L16 10Z" fill="#2196f3" /><path d="M1 17L8 14V28L2 27Z" fill="#fd8a2c" /><rect x="6" y="6" width="18" height="18" fill="#000" /><path d="M8.500 9H12M10.200 9V15M8.500 15H12M14 9H18V13Q18 15 15 15M8.500 20.500H15" stroke="#fff" strokeWidth="1.500" fill="none" /></svg>
            <span className="h-1 w-[7px] rounded-full bg-[#8a8572]" />
          </button>
          <button aria-label="PowerDesigner" className="flex h-12 w-12 flex-col items-center justify-end gap-[5px] rounded-md border border-[#eadfb8] bg-[#faf4df] pb-0">
            <Icon name="logo" className="size-[30px]" />
            <span className="h-1 w-5 rounded-full bg-[#1f8292]" />
          </button>
        </div>
      </div>
      <div className="flex items-center justify-self-end pr-[26px]">
        <svg viewBox="0 0 14 8" className="mr-[22px] w-[14px]" fill="none" stroke="#222" strokeWidth="1.600"><path d="M1 7L7 1L13 7" /></svg>
        <svg viewBox="0 0 18 14" className="mr-[23px] w-[18px]" fill="none" stroke="#111"><path d="M1.500 14V1M16.500 14V1M5.500 14V6M12.500 14V6" strokeWidth="2.400" /><path d="M2 2L9 9L16 2" strokeWidth="2" /></svg>
        <svg viewBox="0 0 18 16" className="mr-[21px] w-[18px]" stroke="#111" strokeWidth="2.400"><path d="M0 4H18M0 12H18" /><path d="M12 0V8M6 8V16" strokeWidth="3" /></svg>
        <svg viewBox="0 0 20 14" className="mr-[21px] w-[20px]" fill="#a9a9a9" stroke="#222" strokeWidth="1.300"><path d="M5 13Q1 13 1 9.500Q1 6 4.500 5.500Q6 1 10.500 1Q14.500 1.500 15.500 5.500Q19 6 19 9.500Q19 13 15 13Z" /><path d="M3 12L11 7L18 11Q17 12.300 15 12.300H5Z" fill="#fff" stroke="none" /></svg>
        <button aria-label="Input method" className="mr-[27px] text-[20px] text-[#8a8a86] [text-shadow:0_0_1px_#333]">英</button>
        <svg viewBox="0 0 20 18" className="mr-[28px] w-5"><path d="M2 2L19 0L18 16L1 18Z" fill="#f4511e" /><path d="M15 4.500Q7 3 6.500 6.500Q6.500 8.500 10.500 9Q14 10 13.500 12Q12 15 4.500 13" fill="none" stroke="#fff" strokeWidth="2.600" /></svg>
        <button aria-label="Network, sound and battery" className="flex items-center gap-[9px]">
          <svg viewBox="0 0 20 16" className="w-5" fill="none" stroke="#222" strokeWidth="1.500"><path d="M1 6Q10-2 19 6M4 9Q10 3.500 16 9M7 12Q10 9 13 12" /><circle cx="10" cy="14" r="1.200" fill="#222" /></svg>
          <svg viewBox="0 0 20 16" className="w-5" fill="none" stroke="#222" strokeWidth="1.300"><path d="M1 5.500H4L8 2V14L4 10.500H1ZM11 5Q13 8 11 11" /><path d="M14 3Q17.500 8 14 13M16.500 1Q21 8 16.500 15" stroke="#aaa" /></svg>
          <svg viewBox="0 0 20 14" className="ml-[2px] w-5" fill="none" stroke="#222" strokeWidth="1.500"><rect x="1" y="1" width="16" height="12" rx="3" /><rect x="3.500" y="3.500" width="11" height="7" rx="1" fill="#111" /><path d="M19 5V9" strokeWidth="2" /></svg>
        </button>
        <button className="ml-[20px] pb-1 text-right leading-[20px]">
          <span className="block">10:02</span>
          <span className="block">2024-06-02</span>
        </button>
        <svg viewBox="0 0 16 18" className="ml-[11px] w-4" fill="none" stroke="#222" strokeWidth="1.300"><path d="M1 14H15L13 10.500V7Q13 1.500 8 1.500T3 7V10.500ZM6 14Q6 17 8 17T10 14" /></svg>
      </div>
    </footer>
  );
}

export default function App() {
  return (
    <div className="flex h-screen min-w-0 flex-col overflow-hidden bg-linear-to-r from-[#d5d1c8] to-[#f2f1f0] font-['Open_Sans','Noto_Sans_CJK_SC',sans-serif]">
      <TitleBar />
      <nav className="flex h-[21px] shrink-0 items-center gap-5 bg-linear-to-b from-[#eff1f3] to-[#d9dbdd] pl-[9px] text-[15px] text-[#1c1c1c]">
        {MENUS.map((m) => (
          <button key={m} className="leading-[20px]">{m}</button>
        ))}
      </nav>
      <Toolbar />
      <div className="flex min-h-0 flex-1">
        <ObjectBrowser />
        <DiagramArea />
      </div>
      <div className="h-[5px] shrink-0 border-y border-[#a0a0a0] bg-[#808080]" />
      <div className="flex h-[38px] shrink-0 items-center justify-between bg-linear-to-b from-[#fbfcfd] via-[#eceef0] to-[#d3d6d9] px-4 pb-[2px] text-[15px] text-black">
        <span role="status">Ready</span>
        <button className="h-[30px] w-[67px] border border-[#808080]">Java</button>
      </div>
      <Taskbar />
    </div>
  );
}
